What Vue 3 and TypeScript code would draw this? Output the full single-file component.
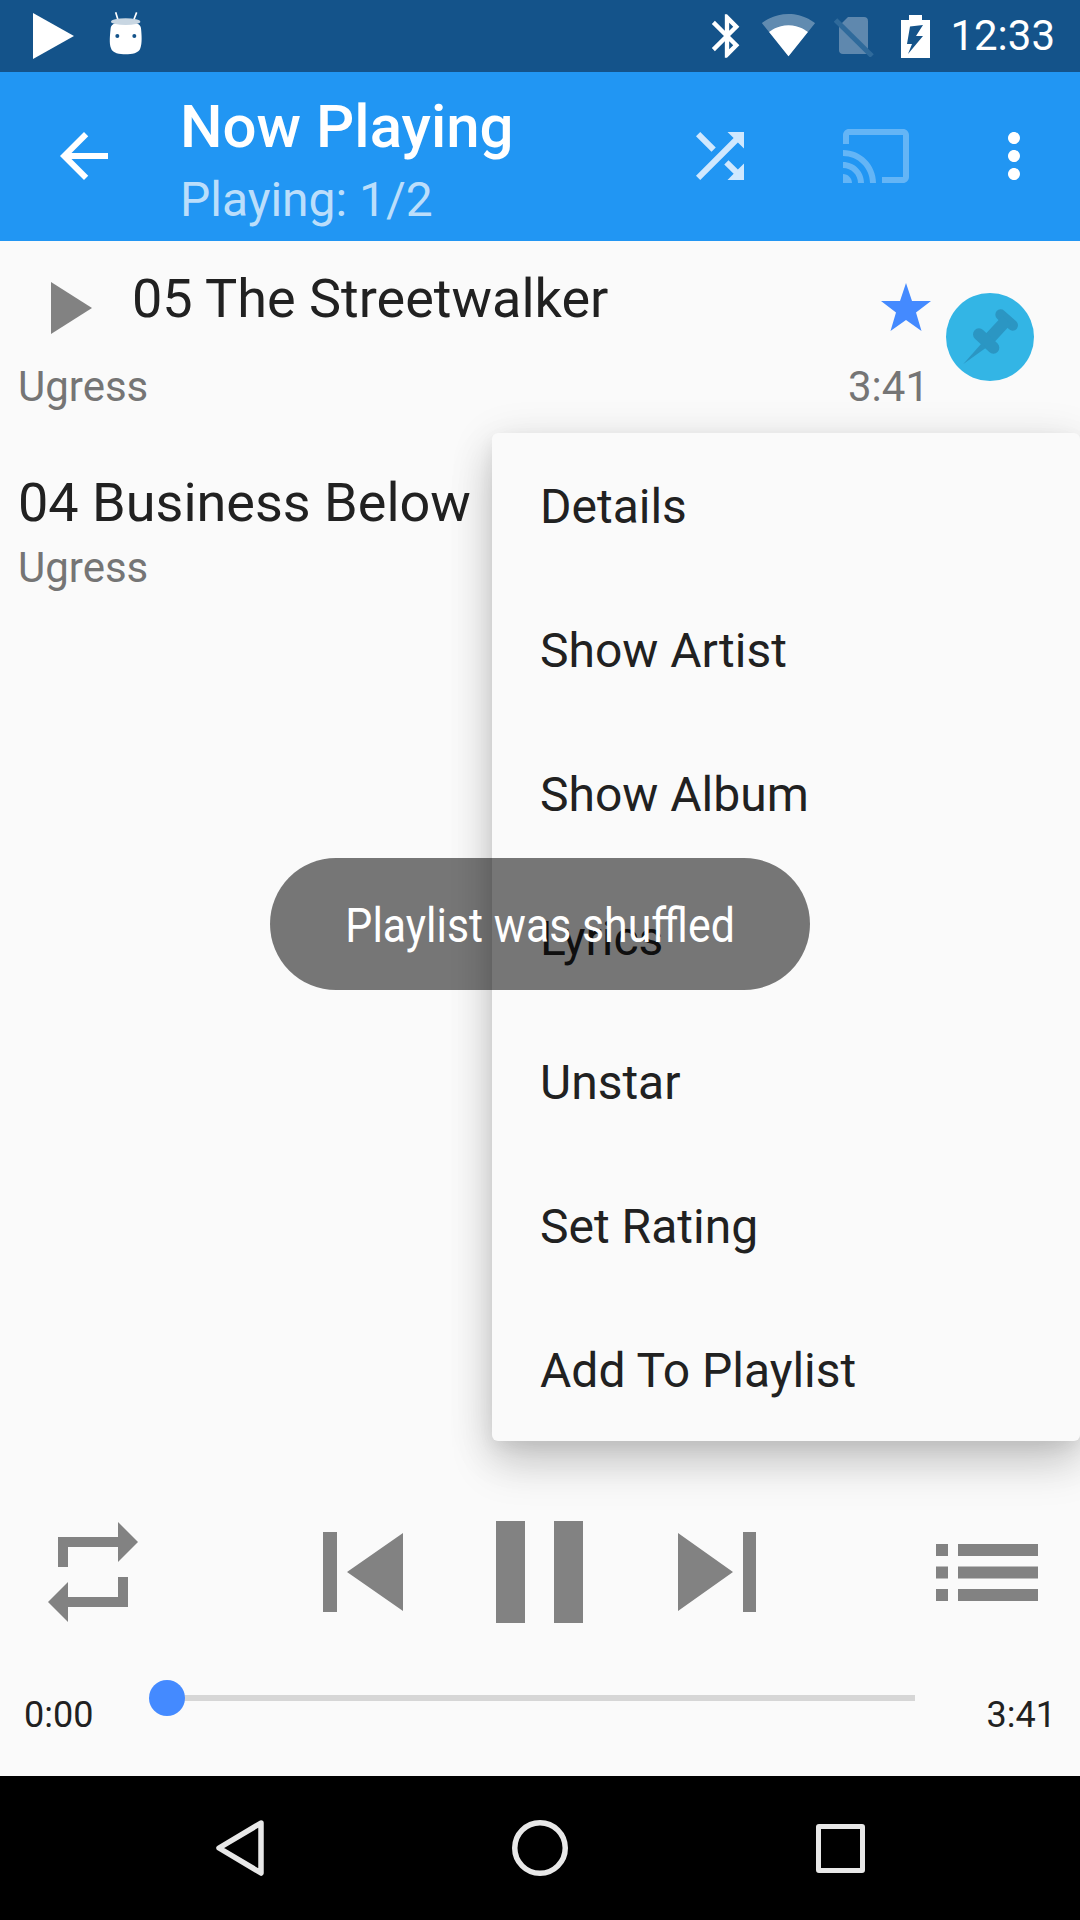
<script setup lang="ts">
const menuItems: string[] = ['Details', 'Show Artist', 'Show Album', 'Lyrics', 'Unstar', 'Set Rating', 'Add To Playlist']
</script>

<template>
  <div class="phone">
    <header class="status">
      <svg class="st-play" viewBox="0 0 41 46"><path d="M0 0L41 23L0 46Z" fill="#fff" /></svg>
      <svg class="st-droid" viewBox="0 0 165 165">
        <path d="M62 22L70 48M125 22L115 48" stroke="#fff" stroke-width="5" fill="none" />
        <path d="M47 70C47 55 70 50 92 50C115 50 138 55 138 70C140 90 142 115 136 130C132 145 110 148 92 148C74 148 52 145 48 130C42 115 45 90 47 70Z" fill="#fff" />
        <ellipse cx="92" cy="50" rx="44" ry="10" fill="#c8d6e2" />
        <circle cx="67" cy="93" r="6" fill="#14538a" />
        <circle cx="118" cy="93" r="6" fill="#14538a" />
      </svg>
      <span class="st-spacer"></span>
      <svg class="st-bt" viewBox="0 0 24 24"><path fill="#fff" d="M17.71 7.71L12 2h-1v7.59L6.41 5 5 6.41 10.59 12 5 17.59 6.41 19 11 14.41V22h1l5.71-5.71-4.3-4.29 4.3-4.29zM13 5.83l1.88 1.88L13 9.59V5.83zm1.88 10.46L13 18.17v-3.76l1.88 1.88z" /></svg>
      <svg class="st-wifi" viewBox="0 0 24 24">
        <path fill="#fff" fill-opacity=".33" d="M12.01 21.49L23.64 7c-.45-.34-4.93-4-11.64-4C5.28 3 .81 6.66.36 7l11.63 14.49.01.01.01-.01z" />
        <path fill="#fff" d="M3.53 10.95l8.46 10.54.01.01.01-.01 8.46-10.54C20.04 10.62 16.81 8 12 8c-4.81 0-8.04 2.62-8.47 2.95z" />
      </svg>
      <svg class="st-sim" viewBox="0 0 40 42">
        <path fill="#5f88ae" d="M14 2H30C32.500 2 34 3.500 34 6V39H9C6.500 39 5 37.500 5 35V11Z" />
        <path stroke="#2f6a9b" stroke-width="5" fill="none" d="M1.500 5L38 41" />
      </svg>
      <svg class="st-batt" viewBox="0 0 29 43">
        <path fill="#fff" d="M8 0H21V5H29V43H0V5H8Z" />
        <path fill="#14538a" d="M22 10L9 11.500L6 29H11L7 39L22 21H15Z" />
      </svg>
      <span class="st-time">12:33</span>
    </header>

    <div class="toolbar">
      <svg class="tb-back" viewBox="0 0 24 24"><path fill="#fff" d="M20 11H7.830l5.590-5.590L12 4l-8 8 8 8 1.410-1.410L7.830 13H20v-2z" /></svg>
      <div class="tb-text">
        <div class="tb-title">Now Playing</div>
        <div class="tb-sub">Playing: 1/2</div>
      </div>
      <svg class="tb-shuffle" viewBox="0 0 24 24"><path fill="#d0e8fe" d="M10.590 9.170L5.410 4 4 5.410l5.170 5.170 1.420-1.410zM14.500 4l2.040 2.040L4 18.590 5.410 20 17.960 7.460 20 9.500V4h-5.500zm.33 9.410l-1.410 1.410 3.130 3.130L14.500 20H20v-5.500l-2.040 2.040-3.130-3.130z" /></svg>
      <svg class="tb-cast" viewBox="0 0 24 24"><path fill="#64b5f6" d="M21 3H3c-1.100 0-2 .9-2 2v3h2V5h18v14h-7v2h7c1.100 0 2-.9 2-2V5c0-1.100-.9-2-2-2zM1 18v3h3c0-1.660-1.340-3-3-3zm0-4v2c2.760 0 5 2.240 5 5h2c0-3.870-3.130-7-7-7zm0-4v2c4.970 0 9 4.030 9 9h2c0-6.080-4.930-11-11-11z" /></svg>
      <svg class="tb-more" viewBox="0 0 24 24"><path fill="#fff" d="M12 8c1.100 0 2-.9 2-2s-.9-2-2-2-2 .9-2 2 .9 2 2 2zm0 2c-1.100 0-2 .9-2 2s.9 2 2 2 2-.9 2-2-.9-2-2-2zm0 6c-1.100 0-2 .9-2 2s.9 2 2 2 2-.9 2-2-.9-2-2-2z" /></svg>
    </div>

    <main class="list">
      <section class="current">
        <div class="cur-head">
          <svg class="cur-play" viewBox="0 0 41 52"><path d="M0 0L41 26L0 52Z" fill="#828282" /></svg>
          <span class="song">05 The Streetwalker</span>
        </div>
        <svg class="cur-star" viewBox="0 0 50 48"><path fill="#448aff" d="M25 0L31 18H50L35 29.500L40.500 48L25 37L9.500 48L15 29.500L0 18H19Z" /></svg>
        <svg class="cur-pin" viewBox="0 0 264 264">
          <circle cx="132" cy="132" r="132" fill="#33b5e5" />
          <g transform="translate(12 21)" fill="#2b96c3" stroke="#2b96c3" stroke-linecap="round">
            <path d="M152 44L188 76" stroke-width="32" fill="none" />
            <path d="M170 60L110 125" stroke-width="36" fill="none" stroke-linecap="butt" />
            <path d="M87 103L130 143" stroke-width="36" fill="none" />
            <path d="M95 130L108 143L40 192Z" stroke="none" />
          </g>
        </svg>
        <span class="artist">Ugress</span>
        <span class="cur-dur">3:41</span>
      </section>

      <section class="next-track">
        <div class="song">04 Business Below</div>
        <div class="artist">Ugress</div>
      </section>
    </main>

    <div class="controls">
      <svg class="c-repeat" viewBox="0 0 24 24"><path fill="#828282" d="M7 7h10v3l4-4-4-4v3H5v6h2V7zm10 10H7v-3l-4 4 4 4v-3h12v-6h-2v4z" /></svg>
      <svg class="c-prev" viewBox="0 0 80 80"><path fill="#828282" d="M0 0H14V80H0ZM24 40L80 1V79Z" /></svg>
      <svg class="c-pause" viewBox="0 0 87 102"><path fill="#828282" d="M0 0H29V102H0ZM58 0H87V102H58Z" /></svg>
      <svg class="c-next" viewBox="0 0 78 80"><path fill="#828282" d="M0 1L55 40L0 79ZM65 0H78V80H65Z" /></svg>
      <svg class="c-queue" viewBox="0 0 102 57"><path fill="#828282" d="M0 0H12V12H0ZM22 0H102V12H22ZM0 22.500H12V34.500H0ZM22 22.500H102V34.500H22ZM0 45H12V57H0ZM22 45H102V57H22Z" /></svg>
    </div>

    <div class="seek">
      <span class="time time-start">0:00</span>
      <div class="slider">
        <div class="track"></div>
        <div class="thumb"></div>
      </div>
      <span class="time time-end">3:41</span>
    </div>

    <nav class="nav">
      <svg class="n-back" viewBox="0 0 50 58"><path d="M46 4L4 29L46 54Z" fill="none" stroke="#e8e8e8" stroke-width="5.500" stroke-linejoin="round" /></svg>
      <svg class="n-home" viewBox="0 0 56 56"><circle cx="28" cy="28" r="25.250" fill="none" stroke="#e8e8e8" stroke-width="5.500" /></svg>
      <div class="n-recent"></div>
    </nav>

    <div class="menu">
      <div v-for="item in menuItems" :key="item" class="menu-item">{{ item }}</div>
    </div>

    <div class="toast"><span class="toast-text">Playlist was shuffled</span></div>
  </div>
</template>

<style scoped>
.phone {
  position: relative;
  width: 1080px;
  height: 1920px;
  overflow: hidden;
  display: flex;
  flex-direction: column;
  background: #fafafa;
  font-family: Roboto, "Liberation Sans", sans-serif;
  color: #212121;
}
svg { display: block; flex: none; }

.status {
  height: 72px;
  flex: none;
  display: flex;
  align-items: center;
  padding: 0 25px 0 33px;
  background: #14538a;
}
.st-play { width: 41px; height: 46px; }
.st-droid { width: 55px; height: 55px; margin: 0 0 7px 21px; }
.st-spacer { flex: 1; }
.st-bt { width: 52px; height: 52px; margin-right: 1px; }
.st-wifi { width: 55px; height: 55px; margin: 0 0 3px 7px; }
.st-sim { width: 40px; height: 42px; margin-left: 18px; }
.st-batt { width: 29px; height: 43px; margin-left: 27px; }
.st-time { margin-left: 20px; font-size: 42px; color: #fff; line-height: 50px; }

.toolbar {
  height: 169px;
  flex: none;
  display: flex;
  align-items: center;
  padding: 0 30px 0 48px;
  background: #2196f3;
  box-sizing: border-box;
}
.tb-back, .tb-shuffle, .tb-cast, .tb-more { width: 72px; height: 72px; margin-top: -1px; }
.tb-text { flex: 1; align-self: flex-start; margin-left: 60px; padding-top: 21px; }
.tb-title { font-size: 60px; font-weight: 500; line-height: 68px; color: #fff; }
.tb-sub { margin-top: 11px; font-size: 48px; line-height: 56px; color: #bbdefb; }
.tb-cast { margin-left: 84px; }
.tb-more { margin-left: 66px; }

.list { flex: 1; min-height: 0; }
.current {
  display: grid;
  grid-template-columns: 1fr auto 88px;
  grid-template-rows: 95px 50px;
  column-gap: 15px;
  padding: 26px 46px 0 18px;
}
.cur-head { display: flex; align-items: flex-start; padding-left: 33px; }
.cur-play { width: 41px; height: 52px; margin-top: 15px; }
.cur-head .song { margin-left: 40px; }
.song { font-size: 54px; line-height: 64px; color: #212121; }
.artist { font-size: 42px; line-height: 50px; color: #757575; }
.cur-star { width: 50px; height: 48px; margin-top: 16px; justify-self: end; }
.cur-pin { width: 88px; height: 88px; grid-column: 3; grid-row: 1 / span 2; margin-top: 26px; }
.cur-dur { grid-column: 2; grid-row: 2; font-size: 42px; line-height: 50px; color: #757575; margin-right: 2px; }
.artist { grid-column: 1; grid-row: 2; }
.next-track { margin-top: 59px; padding-left: 18px; }
.next-track .artist { margin-top: 8px; }

.controls {
  flex: none;
  display: flex;
  align-items: center;
  height: 120px;
  padding-left: 33px;
}
.c-repeat { width: 120px; height: 120px; }
.c-prev { width: 80px; height: 80px; margin-left: 170px; }
.c-pause { width: 87px; height: 102px; margin-left: 93px; }
.c-next { width: 78px; height: 80px; margin-left: 95px; }
.c-queue { width: 102px; height: 57px; margin-left: 180px; }

.seek {
  flex: none;
  height: 144px;
  box-sizing: border-box;
  display: flex;
  align-items: flex-start;
  padding-top: 48px;
}
.time { font-size: 36px; line-height: 42px; color: #212121; margin-top: 14px; }
.time-start { width: 149px; box-sizing: border-box; padding-left: 24px; }
.time-end { flex: 1; text-align: right; padding-right: 24px; }
.slider { position: relative; width: 766px; height: 36px; }
.track { height: 6px; margin: 15px 0 0 18px; background: #d6d6d6; }
.thumb {
  position: absolute;
  left: 0;
  top: 0;
  width: 36px;
  height: 36px;
  border-radius: 50%;
  background: #448aff;
}

.nav {
  flex: none;
  height: 144px;
  display: grid;
  grid-template-columns: repeat(3, 300px);
  justify-content: center;
  justify-items: center;
  align-items: center;
  background: #000;
}
.n-back { width: 50px; height: 58px; }
.n-home { width: 56px; height: 56px; }
.n-recent {
  width: 49px;
  height: 49px;
  box-sizing: border-box;
  border: 5px solid #e8e8e8;
  border-radius: 3px;
}

.menu {
  position: absolute;
  left: 492px;
  top: 433px;
  width: 588px;
  border-radius: 6px;
  background: #fafafa;
  box-shadow: 0 24px 44px rgba(0, 0, 0, .15), 0 9px 46px rgba(0, 0, 0, .12), 0 6px 16px rgba(0, 0, 0, .05);
}
.menu-item {
  height: 144px;
  box-sizing: border-box;
  padding-left: 48px;
  font-size: 48px;
  line-height: 148px;
  color: #212121;
}

.toast {
  position: absolute;
  left: 270px;
  top: 858px;
  width: 540px;
  height: 132px;
  box-sizing: border-box;
  padding-top: 4px;
  border-radius: 66px;
  background: rgba(0, 0, 0, .53);
  display: flex;
  align-items: center;
  justify-content: center;
}
.toast-text {
  font-size: 48px;
  line-height: 56px;
  color: #fff;
  white-space: nowrap;
  transform: scaleX(.893);
}
</style>

<style>
html, body { margin: 0; padding: 0; background: #fafafa; }
</style>
